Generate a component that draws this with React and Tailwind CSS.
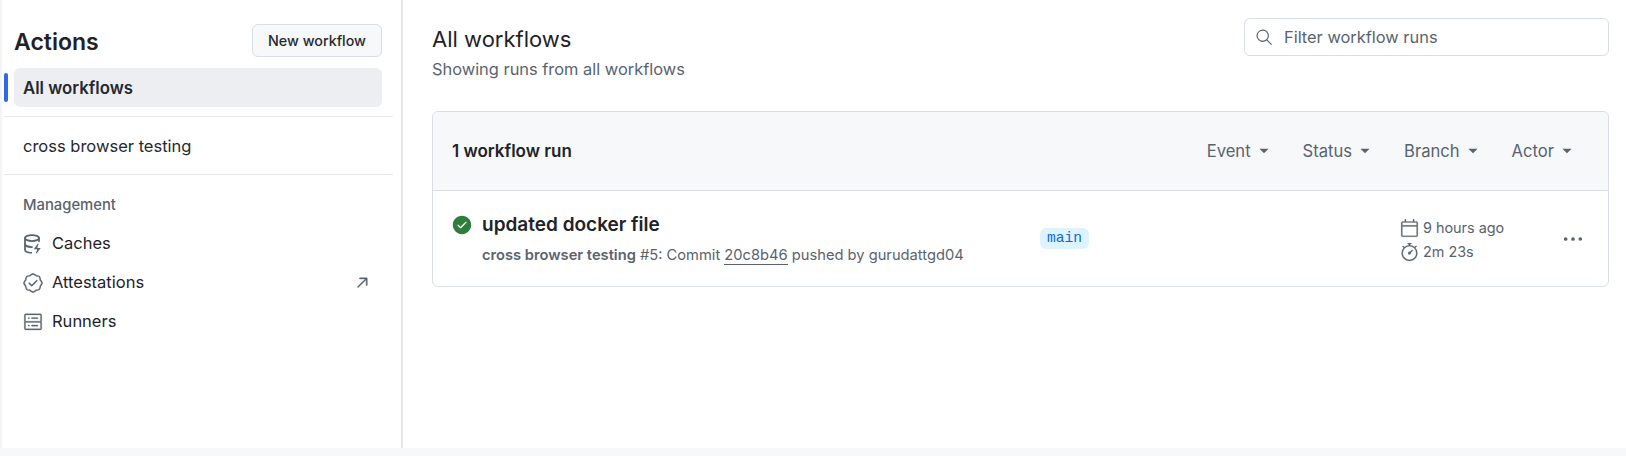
import { GoVerified, GoServer, GoArrowUpRight, GoCalendar, GoStopwatch, GoKebabHorizontal, GoCheckCircleFill, GoSearch, GoTriangleDown } from 'react-icons/go'

const filters = ['Event', 'Status', 'Branch', 'Actor']

// database with a small bolt, not in the icon package
function CacheIcon({ className }) {
  return (
    <svg viewBox="0 0 16 16" className={className} fill="none">
      <g stroke="#59636e" strokeWidth="1.4" strokeLinecap="round">
        <ellipse cx="7.2" cy="3.2" rx="5.6" ry="2.4" />
        <path d="M1.6 3.2v9.4c0 1.3 2.2 2.3 5 2.4" />
        <path d="M12.8 3.2v2.6" />
        <path d="M1.6 8c0 1.3 2.4 2.4 5.6 2.4" />
        <path d="M12 8.2l-2.4 3.4h3.6L10.8 15" fill="#59636e" strokeWidth="1" />
      </g>
    </svg>
  )
}

function SideItem({ icon: Icon, label, right }) {
  return (
    <div className="flex items-center h-[39px] pl-[23px] pr-[33px] text-[16.5px] text-[#1f2328]">
      <Icon className="w-[20px] h-[20px] text-[#59636e] stroke-[0.3px] mr-[9px]" />
      <span>{label}</span>
      {right}
    </div>
  )
}

export default function App() {
  return (
    <div className="w-[1626px] h-[456px] bg-[#f6f8fa] overflow-hidden font-['Inter','Liberation_Sans',sans-serif]">
      <div className="flex h-[448px] bg-white">
        {/* Sidebar */}
        <aside className="w-[403px] shrink-0 border-l-2 border-r-2 border-l-[#f3f4f6] border-r-[#e3e7ec]">
          <div className="flex items-center justify-between pt-[24px] pl-[12px] pr-[19px]">
            <h2 className="pt-[3px] text-[23px] leading-[30px] font-semibold text-[#1f2328]">Actions</h2>
            <button className="h-[33px] w-[130px] rounded-[6px] border border-[#d9dee4] bg-[#f6f8fa] text-[14.3px] font-medium text-[#25292e]">
              New workflow
            </button>
          </div>
          <div className="relative mt-[11px] ml-[12px] mr-[19px]">
            <span className="absolute left-[-10px] top-[5px] w-[4px] h-[29px] rounded-full bg-[#2f6bdc]" />
            <div className="h-[39px] flex items-center pl-[9px] pt-[2px] rounded-[6px] bg-[#eceef1] text-[16.8px] font-semibold text-[#25292e]">
              All workflows
            </div>
          </div>
          <div className="mt-[9px] ml-[2px] mr-[8px] border-t border-[#e6eaef]" />
          <div className="h-[57px] flex items-center pl-[21px] pt-[2px] text-[16.5px] text-[#25292e]">cross browser testing</div>
          <div className="ml-[2px] mr-[8px] border-t border-[#e6eaef]" />
          <div className="pt-[22px] pl-[21px] text-[14.8px] leading-[17px] font-medium text-[#59636e]">Management</div>
          <div className="mt-[10px] -ml-[2px]">
            <SideItem icon={CacheIcon} label="Caches" />
            <SideItem
              icon={GoVerified}
              label="Attestations"
              right={<GoArrowUpRight className="ml-auto mr-[-3px] w-[18px] h-[18px] stroke-[0.6px] text-[#59636e]" />}
            />
            <SideItem icon={GoServer} label="Runners" />
          </div>
        </aside>

        {/* Main */}
        <main className="flex-1 pl-[29px] pr-[17px]">
          <div className="flex items-start justify-between">
            <div className="pt-[24px]">
              <h1 className="text-[22px] leading-[30px] text-[#1f2328]">All workflows</h1>
              <p className="mt-[3px] text-[16.4px] leading-[24px] text-[#59636e]">Showing runs from all workflows</p>
            </div>
            <div className="mt-[18px] w-[365px] h-[38px] flex items-center pl-[10px] rounded-[6px] border border-[#d9dee4] bg-white text-[16.4px] text-[#59636e]">
              <GoSearch className="w-[18px] h-[18px] mr-[11px]" />
              Filter workflow runs
            </div>
          </div>

          <div className="mt-[30px] rounded-[6px] border border-[#d9dee4]">
            <div className="h-[79px] flex items-center justify-between pl-[19px] pr-[33px] rounded-t-[6px] bg-[#f6f8fa] border-b border-[#d9dee4]">
              <span className="pt-[2px] text-[17px] font-semibold text-[#1f2328]">1 workflow run</span>
              <div className="flex items-center gap-[31px]">
                {filters.map((f) => (
                  <span key={f} className="flex items-center text-[16.6px] text-[#59636e]">
                    {f}
                    <GoTriangleDown className="ml-[5px] w-[16px] h-[16px]" />
                  </span>
                ))}
              </div>
            </div>
            <div className="h-[95px] flex items-center pl-[19px] pr-[24px]">
              <div className="w-[588px] shrink-0">
                <div className="flex items-center">
                  <GoCheckCircleFill className="w-[20px] h-[20px] text-[#2f7d3b] mr-[10px]" />
                  <span className="text-[19px] leading-[24px] font-semibold text-[#1f2328]">updated docker file</span>
                </div>
                <p className="mt-[8px] ml-[30px] text-[14.7px] leading-[20px] text-[#59636e]">
                  <span className="font-semibold">cross browser testing</span> #5: Commit{' '}
                  <span className="border-b border-[#59636e]">20c8b46</span> pushed by gurudattgd04
                </p>
              </div>
              <span className="h-[21px] px-[7px] flex items-center rounded-[6px] bg-[#ddf4ff] font-['Liberation_Mono',monospace] text-[14.6px] text-[#0969da]">
                main
              </span>
              <div className="ml-auto mr-[40px] w-[122px] text-[14.4px] leading-[20px] text-[#59636e] mt-[3px]">
                <div className="flex items-center h-[24px]">
                  <GoCalendar className="w-[19px] h-[19px] stroke-[0.3px] mr-[4px]" />9 hours ago
                </div>
                <div className="flex items-center h-[24px]">
                  <GoStopwatch className="w-[19px] h-[19px] stroke-[0.3px] mr-[4px]" />2m 23s
                </div>
              </div>
              <GoKebabHorizontal className="w-[22px] h-[22px] text-[#59636e]" />
            </div>
          </div>
        </main>
      </div>
    </div>
  )
}
